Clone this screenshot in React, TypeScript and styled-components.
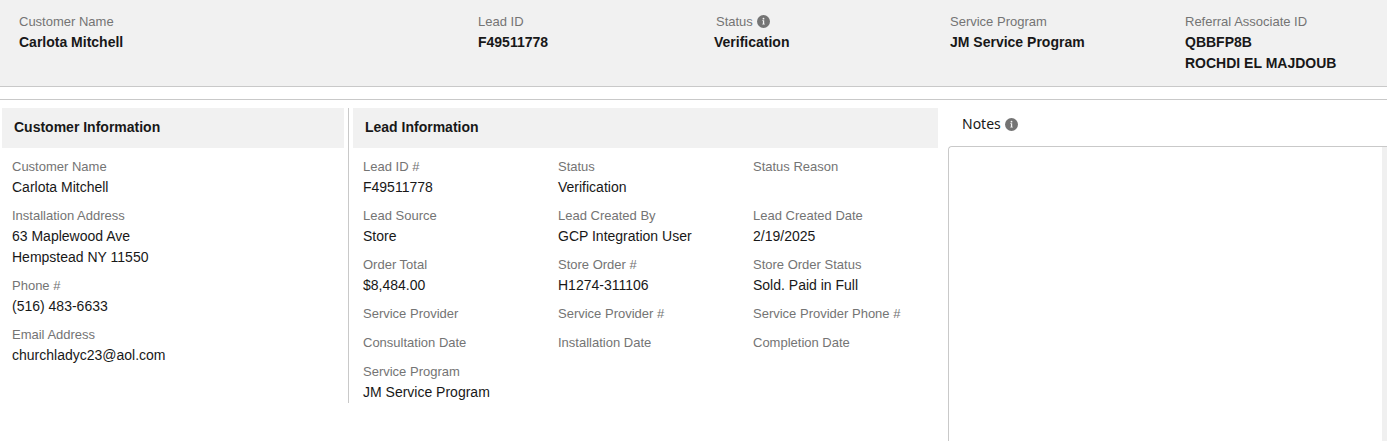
import React from "react";
import styled, { createGlobalStyle } from "styled-components";

const GlobalStyle = createGlobalStyle`
  * {
    box-sizing: border-box;
  }
  body {
    margin: 0;
    background: #fff;
    color: #181818;
    font-family: "Liberation Sans", Arial, sans-serif;
    font-size: 14px;
    line-height: 20px;
  }
`;

const Page = styled.main`
  display: flex;
  flex-direction: column;
  min-height: 100vh;
`;

const Summary = styled.dl`
  display: grid;
  grid-template-columns: 459fr 236fr 236fr 235fr 202fr;
  margin: 0;
  padding: 11px 0 13px 19px;
  background: #f1f1f1;
  border-bottom: 1px solid #c9c9c9;
`;

const Body = styled.div`
  flex: 1;
  display: grid;
  grid-template-columns: minmax(0, 938fr) minmax(0, 439fr);
  column-gap: 10px;
  margin-top: 12px;
  border-top: 1px solid #c9c9c9;
  padding-top: 8px;
`;

const Details = styled.div`
  display: grid;
  grid-template-columns: minmax(0, 349fr) minmax(0, 589fr);
  align-self: start;
`;

const CustomerPanel = styled.section`
  padding: 0 4px 0 2px;
  border-right: 1px solid #c9c9c9;
`;

const LeadPanel = styled.section`
  padding: 0 0 1px 4px;
`;

const PanelTitle = styled.h2`
  margin: 0;
  padding: 9px 12px 11px;
  background: #f1f1f1;
  font-size: 14px;
  line-height: 20px;
  font-weight: 700;
`;

const FieldGrid = styled.dl<{ $columns: number }>`
  display: grid;
  grid-template-columns: repeat(${(p) => p.$columns}, minmax(0, 1fr));
  row-gap: 8px;
  margin: 0;
  padding-top: 8px;
`;

const FieldBox = styled.div<{ $inset?: boolean }>`
  min-width: 0;
  padding-left: ${(p) => (p.$inset ? "10px" : "0")};
`;

const FieldLabel = styled.dt<{ $help?: boolean }>`
  display: flex;
  align-items: center;
  gap: 4px;
  padding-left: ${(p) => (p.$help ? "2px" : "0")};
  color: #747474;
  font-size: 13px;
  line-height: 21px;
`;

const FieldValue = styled.dd<{ $strong?: boolean }>`
  display: grid;
  row-gap: 1px;
  margin: 0;
  font-weight: ${(p) => (p.$strong ? 700 : 400)};
`;

const Notes = styled.section`
  display: flex;
  flex-direction: column;
`;

const NotesHeading = styled.div`
  display: flex;
  align-items: center;
  gap: 4px;
  padding: 6px 14px 12px;
`;

const NotesLabel = styled.label`
  font-family: "Noto Sans", "Open Sans", sans-serif;
  font-size: 14px;
  line-height: 20px;
`;

const NotesFrame = styled.div`
  flex: 1;
  display: flex;
  border: solid #c9c9c9;
  border-width: 1px 0 0 1px;
  border-top-left-radius: 4px;
`;

const NotesInput = styled.textarea`
  flex: 1;
  min-width: 0;
  padding: 8px 12px;
  border: 0;
  border-right: 5px solid #f0f0f0;
  border-top-left-radius: 4px;
  outline: 0;
  resize: none;
  background: #fff;
  font: inherit;
`;

const InfoIcon = () => (
  <svg width="13" height="13" viewBox="0 0 13 13" aria-hidden="true">
    <circle cx="6.5" cy="6.5" r="6.5" fill="#747474" />
    <circle cx="6.5" cy="3.7" r="0.9" fill="#f4f4f4" />
    <path d="M5.3 5.3h1.9v3.4h.6v.8H5.3v-.8h.6V6.1h-.6z" fill="#f4f4f4" />
  </svg>
);

type FieldData = { label: string; lines?: string[]; help?: boolean };

const summary: FieldData[] = [
  { label: "Customer Name", lines: ["Carlota Mitchell"] },
  { label: "Lead ID", lines: ["F49511778"] },
  { label: "Status", lines: ["Verification"], help: true },
  { label: "Service Program", lines: ["JM Service Program"] },
  { label: "Referral Associate ID", lines: ["QBBFP8B", "ROCHDI EL MAJDOUB"] },
];

const customer: FieldData[] = [
  { label: "Customer Name", lines: ["Carlota Mitchell"] },
  { label: "Installation Address", lines: ["63 Maplewood Ave", "Hempstead NY 11550"] },
  { label: "Phone #", lines: ["(516) 483-6633"] },
  { label: "Email Address", lines: ["churchladyc23@aol.com"] },
];

const lead: FieldData[] = [
  { label: "Lead ID #", lines: ["F49511778"] },
  { label: "Status", lines: ["Verification"] },
  { label: "Status Reason" },
  { label: "Lead Source", lines: ["Store"] },
  { label: "Lead Created By", lines: ["GCP Integration User"] },
  { label: "Lead Created Date", lines: ["2/19/2025"] },
  { label: "Order Total", lines: ["$8,484.00"] },
  { label: "Store Order #", lines: ["H1274-311106"] },
  { label: "Store Order Status", lines: ["Sold. Paid in Full"] },
  { label: "Service Provider" },
  { label: "Service Provider #" },
  { label: "Service Provider Phone #" },
  { label: "Consultation Date" },
  { label: "Installation Date" },
  { label: "Completion Date" },
  { label: "Service Program", lines: ["JM Service Program"] },
];

type FieldProps = { field: FieldData; strong?: boolean; inset?: boolean };

const Field = ({ field, strong, inset }: FieldProps) => (
  <FieldBox $inset={inset}>
    <FieldLabel $help={field.help}>
      {field.label}
      {field.help && <InfoIcon />}
    </FieldLabel>
    <FieldValue $strong={strong}>
      {field.lines?.map((line) => (
        <span key={line}>{line}</span>
      ))}
    </FieldValue>
  </FieldBox>
);

export default function App() {
  return (
    <Page>
      <GlobalStyle />
      <Summary>
        {summary.map((f) => (
          <Field key={f.label} field={f} strong />
        ))}
      </Summary>
      <Body>
        <Details>
          <CustomerPanel>
            <PanelTitle>Customer Information</PanelTitle>
            <FieldGrid $columns={1}>
              {customer.map((f) => (
                <Field key={f.label} field={f} inset />
              ))}
            </FieldGrid>
          </CustomerPanel>
          <LeadPanel>
            <PanelTitle>Lead Information</PanelTitle>
            <FieldGrid $columns={3}>
              {lead.map((f) => (
                <Field key={f.label} field={f} inset />
              ))}
            </FieldGrid>
          </LeadPanel>
        </Details>
        <Notes>
          <NotesHeading>
            <NotesLabel htmlFor="notes">Notes</NotesLabel>
            <InfoIcon />
          </NotesHeading>
          <NotesFrame>
            <NotesInput id="notes" />
          </NotesFrame>
        </Notes>
      </Body>
    </Page>
  );
}
